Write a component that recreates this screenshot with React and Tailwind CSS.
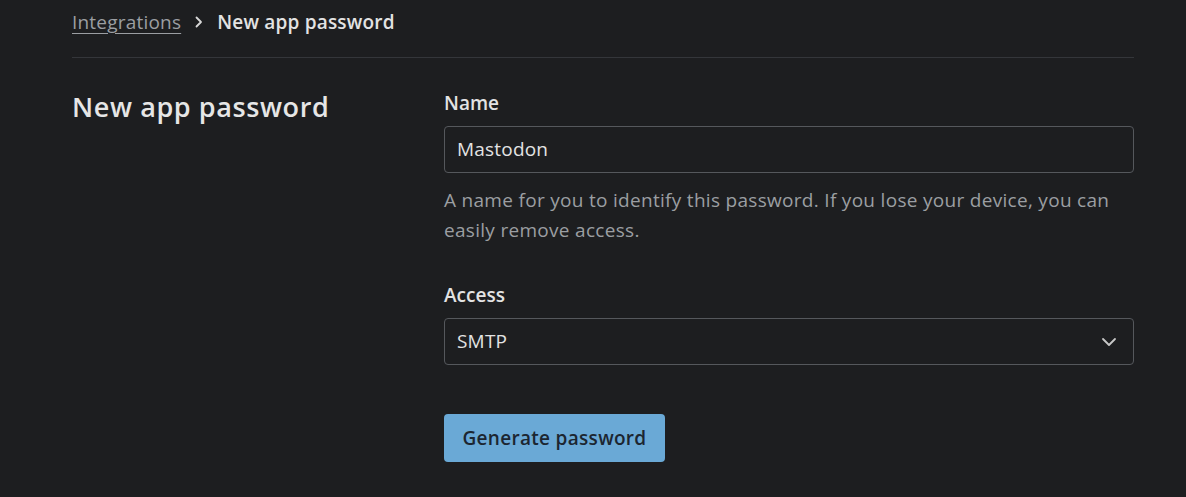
import React from "react";

export default function App() {
  return (
    <div className="min-h-[497px] w-full bg-[#1d1e20] text-[#e3e3e3]" style={{ fontFamily: "'Open Sans', Lato, sans-serif" }}>
      <div className="ml-[72px] w-[1062px]">
        <div className="flex items-center h-[44px] text-[19px] tracking-[0.2px]">
          <a className="text-[#9b9ea2] underline underline-offset-[4px] decoration-[1px]">Integrations</a>
          <svg className="ml-[12px] mr-[12px]" width="12" height="14" viewBox="0 0 12 14" fill="none">
            <path d="M3.5 2.5 L8 7 L3.5 11.5" stroke="#d8d8d8" strokeWidth="1.8" strokeLinecap="round" strokeLinejoin="round" />
          </svg>
          <span className="font-semibold text-[#e3e3e3]">New app password</span>
        </div>
        <div className="mt-[13px] h-px bg-[#34363a]" />
        <div className="flex pt-[33px]">
          <div className="w-[372px] shrink-0">
            <h1 className="text-[27px] font-semibold leading-[32px] tracking-[0.6px] text-[#e6e6e6]">New app password</h1>
          </div>
          <div className="flex-1">
            <label className="block text-[19px] font-semibold leading-[24px]">Name</label>
            <div className="mt-[11px] h-[47px] rounded-[4px] border border-[#55585c] flex items-center px-[12px] text-[19px] tracking-[0.2px] text-[#e3e3e3]">
              Mastodon
            </div>
            <p className="mt-[12px] text-[19px] leading-[30px] tracking-[0.3px] text-[#9b9ea2]">
              A name for you to identify this password. If you lose your device, you can easily remove access.
            </p>
            <label className="mt-[38px] block text-[19px] font-semibold leading-[24px]">Access</label>
            <div className="mt-[11px] h-[47px] rounded-[4px] border border-[#55585c] flex items-center justify-between pl-[12px] pr-[16px] text-[19px] tracking-[0.2px] text-[#e3e3e3]">
              <span>SMTP</span>
              <svg width="16" height="10" viewBox="0 0 16 10" fill="none">
                <path d="M2 2 L8 8 L14 2" stroke="#c8c8c8" strokeWidth="1.8" strokeLinecap="round" strokeLinejoin="round" />
              </svg>
            </div>
            <button className="mt-[49px] h-[48px] w-[221px] rounded-[4px] bg-[#6aa9d6] text-[19px] font-semibold tracking-[0.3px] text-[#1c2631]">
              Generate password
            </button>
          </div>
        </div>
      </div>
    </div>
  );
}
